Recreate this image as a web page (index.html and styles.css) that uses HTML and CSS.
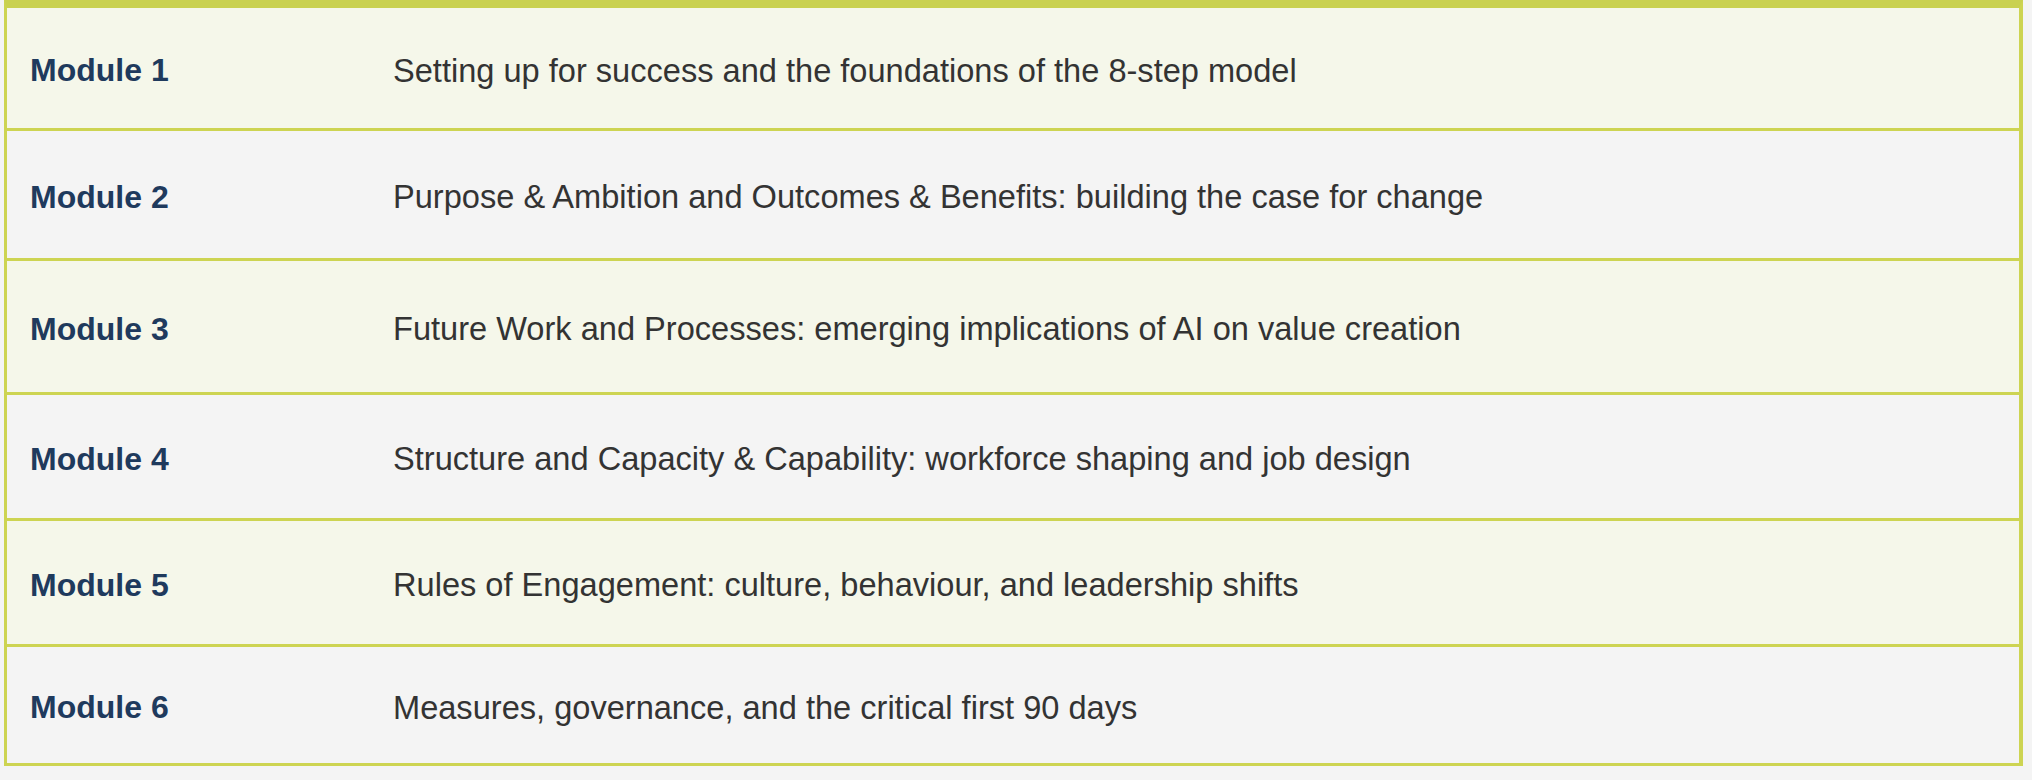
FILE: index.html
```html
<!DOCTYPE html>
<html lang="en">
<head>
<meta charset="utf-8">
<title>Modules</title>
<link rel="stylesheet" href="styles.css">
</head>
<body>
<div class="modules">
  <div class="row">
    <div class="label">Module 1</div>
    <div class="desc">Setting up for success and the foundations of the 8-step model</div>
  </div>
  <div class="row">
    <div class="label">Module 2</div>
    <div class="desc">Purpose &amp; Ambition and Outcomes &amp; Benefits: building the case for change</div>
  </div>
  <div class="row">
    <div class="label">Module 3</div>
    <div class="desc">Future Work and Processes: emerging implications of AI on value creation</div>
  </div>
  <div class="row">
    <div class="label">Module 4</div>
    <div class="desc">Structure and Capacity &amp; Capability: workforce shaping and job design</div>
  </div>
  <div class="row">
    <div class="label">Module 5</div>
    <div class="desc">Rules of Engagement: culture, behaviour, and leadership shifts</div>
  </div>
  <div class="row">
    <div class="label">Module 6</div>
    <div class="desc">Measures, governance, and the critical first 90 days</div>
  </div>
</div>
</body>
</html>
```
FILE: styles.css
```css
html, body {
  margin: 0;
  padding: 0;
  background: #f4f4f4;
}
body {
  font-family: "Liberation Sans", Arial, Helvetica, sans-serif;
}
.modules {
  margin-left: 4px;
  width: 2019px;
  box-sizing: border-box;
  border-top: 8px solid #c9d150;
  border-left: 3px solid #cdd452;
  border-right: 4px solid #cdd452;
  border-bottom: 3px solid #cdd452;
  display: flex;
  flex-direction: column;
}
.row {
  display: flex;
  align-items: center;
  padding-top: 5px;
  border-bottom: 3px solid #cdd452;
  box-sizing: border-box;
}
.row:last-child {
  border-bottom: none;
}
.row:nth-child(odd) {
  background: #f5f7ea;
}
.row:nth-child(even) {
  background: #f4f4f4;
}
.row:nth-child(1) { height: 123px; }
.row:nth-child(2) { height: 130px; }
.row:nth-child(3) { height: 134px; }
.row:nth-child(4) { height: 126px; }
.row:nth-child(5) { height: 126px; }
.row:nth-child(6) { height: 116px; }
.label {
  width: 363px;
  padding-left: 23px;
  flex: none;
  font-weight: bold;
  font-size: 32px;
  color: #1f3a5d;
}
.desc {
  font-size: 32.6px;
  color: #333333;
}
```
